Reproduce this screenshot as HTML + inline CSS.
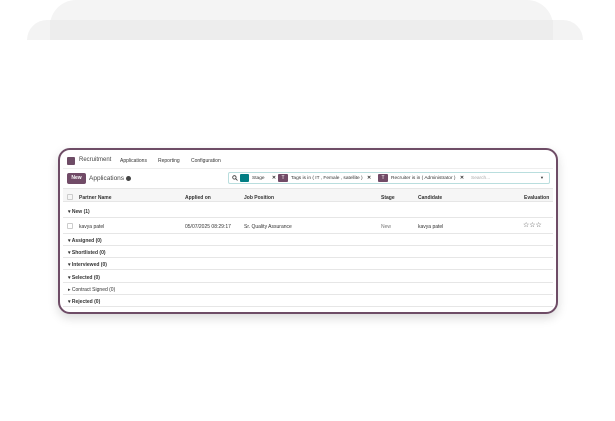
<!DOCTYPE html><html><head><style>
*{margin:0;padding:0;box-sizing:border-box}
body{width:615px;height:421px;background:#fff;position:relative;overflow:hidden;font-family:"Liberation Sans",sans-serif;color:#222}
.a{position:absolute}
.t{position:absolute;white-space:nowrap;font-size:5px;color:#333}
.b{font-weight:bold}
.ln{position:absolute;left:3px;right:3px;height:1px;background:#e6e6e6}
.chk{position:absolute;width:6px;height:6px;border:1px solid #ccc;border-radius:1px}
</style></head><body>
<div class="a" style="left:27px;top:20px;width:556px;height:20px;background:#f3f3f3;border-radius:25px 25px 0 0"></div>
<div class="a" style="left:50px;top:0;width:503px;height:40px;background:#f4f4f4;border-radius:26px 26px 0 0"></div>
<div class="a" style="left:50px;top:20px;width:503px;height:20px;background:#ededed"></div>

<div class="a" style="left:58px;top:148px;width:500px;height:166px;border:2.5px solid #6e4c66;border-radius:12px;background:#fff;box-shadow:0 4px 10px rgba(0,0,0,.15);overflow:hidden">
 <div class="a" style="left:7px;top:7px;width:8px;height:8px;background:#6e4c66;border-radius:1px"></div>
 <div class="t" style="left:19px;top:7px;font-size:6px;color:#444">Recruitment</div>
 <div class="t" style="left:60px;top:8px">Applications</div>
 <div class="t" style="left:98px;top:8px">Reporting</div>
 <div class="t" style="left:131px;top:8px">Configuration</div>
 <div class="ln" style="top:18px;background:#eee"></div>
 <div class="a" style="left:7px;top:23px;width:19px;height:11px;background:#714b67;border-radius:2px;color:#fff;font-size:5px;font-weight:bold;line-height:11px;text-align:center">New</div>
 <div class="t" style="left:29px;top:25px;font-size:6.5px;color:#444">Applications <span style="display:inline-block;width:5px;height:5px;border-radius:50%;background:#444;vertical-align:middle"></span></div>
 <div class="a" style="left:168px;top:22px;width:322px;height:12px;border:1px solid #b9dede;border-radius:2px"></div>
 <svg class="a" style="left:172px;top:25px" width="6" height="6" viewBox="0 0 6 6"><circle cx="2.4" cy="2.4" r="1.7" fill="none" stroke="#333" stroke-width=".8"/><line x1="3.7" y1="3.7" x2="5.5" y2="5.5" stroke="#333" stroke-width=".8"/></svg>
 <div class="a" style="left:180px;top:24px;width:9px;height:8px;background:#017e84;border-radius:1px"></div>
 <div class="t" style="left:192px;top:26px;font-size:4.8px">Stage <b style="margin-left:6px">✕</b></div>
 <div class="a" style="left:218px;top:24px;width:10px;height:8px;background:#714b67;border-radius:1px;color:#fff;font-size:5px;text-align:center;line-height:8px">T</div>
 <div class="t" style="left:231px;top:26px;font-size:4.8px">Tags is in ( IT , Female , satellite ) <b style="margin-left:3px">✕</b></div>
 <div class="a" style="left:318px;top:24px;width:10px;height:8px;background:#714b67;border-radius:1px;color:#fff;font-size:5px;text-align:center;line-height:8px">T</div>
 <div class="t" style="left:331px;top:26px;font-size:4.8px">Recruiter is in ( Administrator ) <b style="margin-left:3px">✕</b></div>
 <div class="t" style="left:411px;top:26px;font-size:4.8px;color:#aaa">Search...</div>
 <div class="t" style="left:480px;top:25px;font-size:4px">▼</div>
 <div class="a" style="left:3px;top:38px;right:3px;height:13px;background:#f6f6f6"></div>
 <div class="ln" style="top:38px"></div>
 <div class="chk" style="left:7px;top:44px"></div>
 <div class="t b" style="left:19px;top:45px">Partner Name</div>
 <div class="t b" style="left:125px;top:45px">Applied on</div>
 <div class="t b" style="left:184px;top:45px">Job Position</div>
 <div class="t b" style="left:321px;top:45px">Stage</div>
 <div class="t b" style="left:358px;top:45px">Candidate</div>
 <div class="t b" style="left:464px;top:45px">Evaluation</div>
 <div class="ln" style="top:51px"></div>
 <div class="t b" style="left:8px;top:59px">▾ New (1)</div>
 <div class="ln" style="top:67px"></div>
 <div class="chk" style="left:7px;top:73px"></div>
 <div class="t" style="left:19px;top:74px">kavya patel</div>
 <div class="t" style="left:125px;top:74px">05/07/2025 08:29:17</div>
 <div class="t" style="left:184px;top:74px">Sr. Quality Assurance</div>
 <div class="t" style="left:321px;top:74px;color:#777">New</div>
 <div class="t" style="left:358px;top:74px">kavya patel</div>
 <div class="t" style="left:463px;top:71px;font-size:7px;color:#444">☆☆☆</div>
 <div class="ln" style="top:83px"></div>
 <div class="t b" style="left:8px;top:88px">▾ Assigned (0)</div>
 <div class="ln" style="top:95px"></div>
 <div class="t b" style="left:8px;top:100px">▾ Shortlisted (0)</div>
 <div class="ln" style="top:107px"></div>
 <div class="t b" style="left:8px;top:112px">▾ Interviewed (0)</div>
 <div class="ln" style="top:119px"></div>
 <div class="t b" style="left:8px;top:125px">▾ Selected (0)</div>
 <div class="ln" style="top:132px"></div>
 <div class="t" style="left:8px;top:137px">▸ Contract Signed (0)</div>
 <div class="ln" style="top:144px"></div>
 <div class="t b" style="left:8px;top:149px">▾ Rejected (0)</div>
 <div class="ln" style="top:156px"></div>
</div>
</body></html>
